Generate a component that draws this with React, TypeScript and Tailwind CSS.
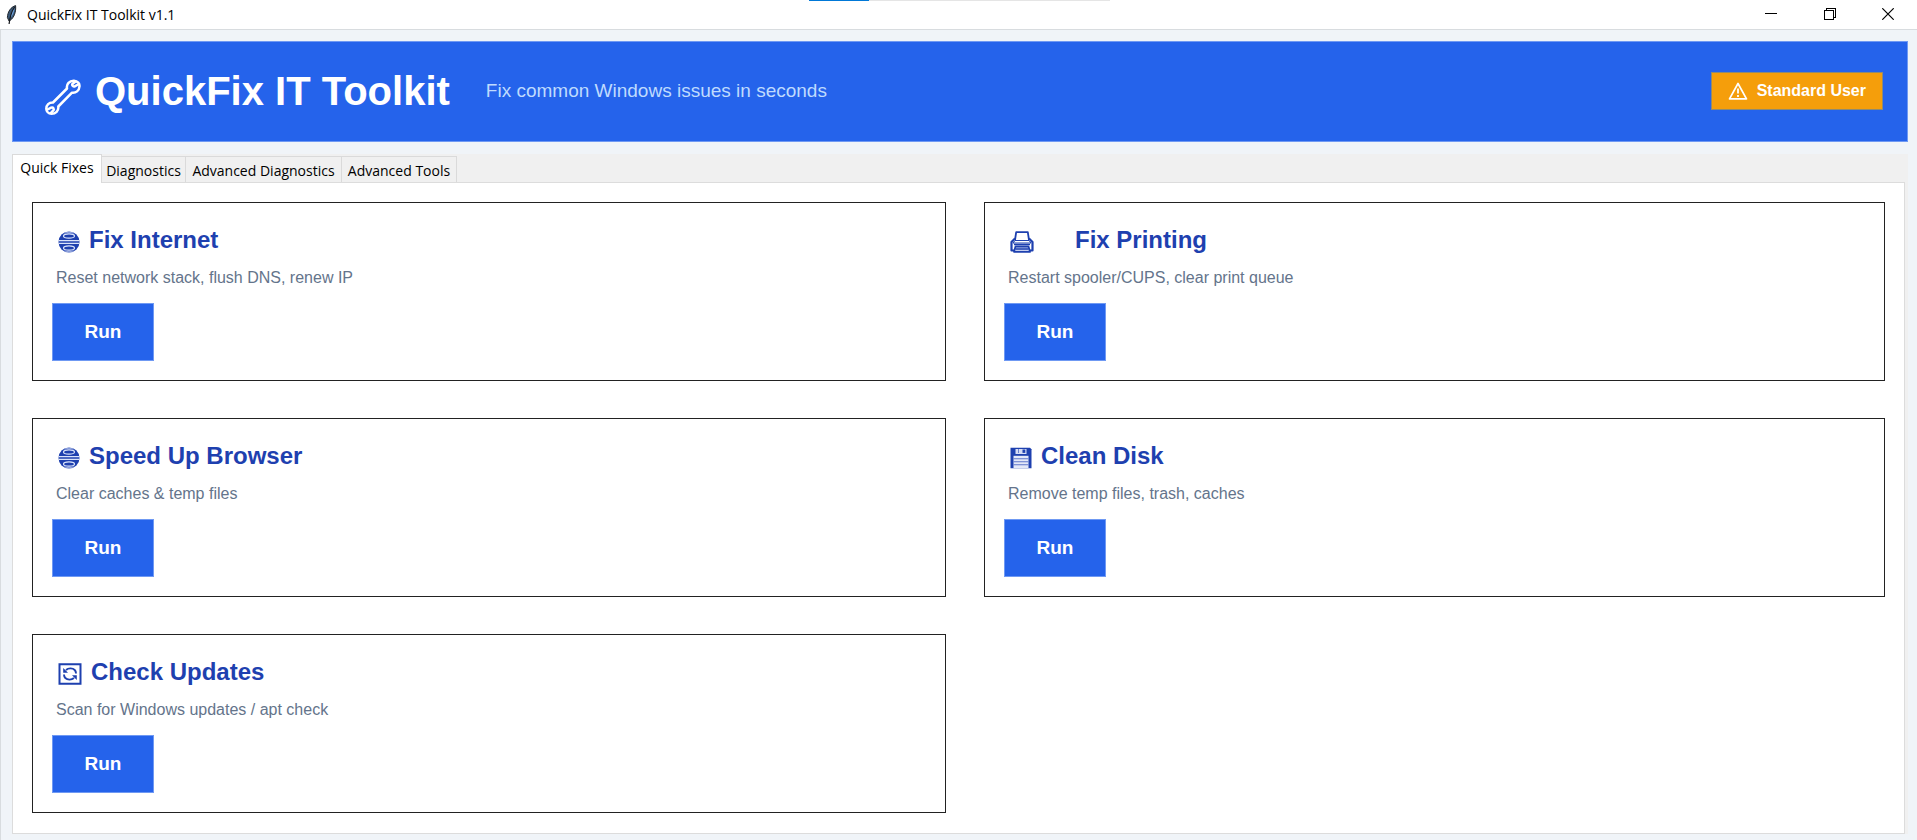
import React from "react";
import clsx from "clsx";

const sans = "font-['Liberation_Sans',Arial,sans-serif]";
const segoe = "font-['Open_Sans','Noto_Sans',sans-serif]";

function FeatherIcon() {
  return (
    <svg viewBox="0 0 12 20" className="w-3 h-5" aria-hidden="true">
      <path
        d="M9.6.6C5 2 1.6 6.500 1.400 12.500L3 16l1.400-.8C8 12.500 10.200 7 9.600.6Z"
        fill="#3a5878"
        stroke="#20252c"
        strokeWidth="1"
      />
      <path d="M8.600 2C6.400 4.500 5.400 8 4.800 12.500 7 10 8.600 6.500 8.600 2Z" fill="#6fa3dc" />
      <path d="M8.600 2C5.500 6.500 3.800 12 3.100 19" fill="none" stroke="#15181c" strokeWidth="1.200" />
    </svg>
  );
}

function WrenchIcon() {
  return (
    <svg viewBox="0 0 36 36" className="w-9 h-9" aria-hidden="true">
      <g
        fill="none"
        stroke="#fff"
        strokeWidth="2.500"
        strokeLinejoin="round"
        strokeLinecap="round"
      >
        <path d="M8 23.500 22 9.500C21.200 5 24.500 1.500 29 1.700c3.500.2 6 3 5.400 6-.2 4-3.500 6.500-7.400 6L13.300 27.500c.6 4.500-2.800 7.200-6.800 7.200-3.200 0-5.200-2.500-5.200-5C1.300 26 4 23.300 8 23.500Z" />
        <path d="m33 5.500-3.200 1.800c-2 .8-3.500-1.600-1.800-2.900L30.500 2.500" />
        <path d="m2.500 30.500 3.700-1.800c2-.8 3.500 1.600 1.900 2.900L6 33.800" />
      </g>
    </svg>
  );
}

function WarningIcon() {
  return (
    <svg viewBox="0 0 20 18" className="w-5 h-[18px]" aria-hidden="true">
      <path
        d="M10 1.500 18.500 16.800H1.500Z"
        fill="none"
        stroke="#fff"
        strokeWidth="1.700"
        strokeLinejoin="round"
      />
      <path d="M10 6.500v5M10 13v2" stroke="#fff" strokeWidth="1.800" />
    </svg>
  );
}

function GlobeIcon() {
  return (
    <svg viewBox="0 0 22 22" className="w-[22px] h-[22px]" aria-hidden="true">
      <circle cx="11" cy="11" r="10.500" fill="#1e40af" />
      <g fill="none" stroke="#dbe4fb" strokeWidth="1.200">
        <path d="M1 9.700h20M1 12.300h20" />
        <ellipse cx="11" cy="5" rx="5.500" ry="2.200" />
        <ellipse cx="11" cy="17" rx="5.500" ry="2.200" />
        <path d="M6.500 2.200C8.500.9 13.500.9 15.500 2.200M6.500 19.800c2 1.300 7 1.300 9 0" strokeWidth=".7" />
      </g>
    </svg>
  );
}

function PrinterIcon() {
  return (
    <svg viewBox="0 0 24 22" className="w-6 h-[22px]" aria-hidden="true">
      <g fill="none" stroke="#1e40af" strokeWidth="1.800" strokeLinejoin="round">
        <path d="M5 9 6.200 1.200h11.600L19 9" />
        <path d="M5 7.500 1.500 11v8.500H4M19 7.500l3.500 3.500v8.500H20" strokeWidth="2.200" />
        <path d="M5 9.500h14l2 2.500H3Z" strokeWidth="1" />
        <path d="M5.500 15.500h13l1.500 5.300H4Z" fill="#c5cff0" />
        <path d="M4 13.500h16M5.500 18h13" strokeWidth="1.300" />
      </g>
    </svg>
  );
}

function FloppyIcon() {
  return (
    <svg viewBox="0 0 22 22" className="w-[22px] h-[22px]" aria-hidden="true">
      <path d="M.5.800h19.500l1.500 1.500v19H.5Z" fill="#1e40af" />
      <path d="M5.500 2h11v5h-11Z" fill="#d5dcf5" />
      <path d="M12.500 2.500h2.800v3.400h-2.800Z" fill="#1e40af" />
      <path d="M8.500 2v4" stroke="#6d82cf" strokeWidth="1" />
      <path d="M3.500 8.800h15v12.200h-15Z" fill="#e3e8f8" />
      <path d="M3.500 11.800h15M3.500 14.800h15M3.500 17.800h15" stroke="#5f76c9" strokeWidth="1.100" />
    </svg>
  );
}

function UpdatesIcon() {
  return (
    <svg viewBox="0 0 24 22" className="w-6 h-[22px]" aria-hidden="true">
      <path d="M1.500 1.200h21v19.600h-21Z" fill="none" stroke="#1e40af" strokeWidth="2" />
      <g fill="none" stroke="#1e40af" strokeWidth="1.900">
        <path d="M8 7c2.500-2.200 6.700-2 8.700 0 .9.900 1.300 2 1.300 3.500" />
        <path d="M16 15c-2.500 2.200-6.700 2-8.700 0C6.400 14.100 6 13 6 11.500" />
      </g>
      <path d="M5.200 5v4.800H10ZM18.800 17v-4.800H14Z" fill="#1e40af" />
    </svg>
  );
}

const tabs = ["Quick Fixes", "Diagnostics", "Advanced Diagnostics", "Advanced Tools"];

const tabWidths = ["w-[90px]", "w-[84px]", "w-[156px]", "w-[115px]"];

const fixes = [
  { title: "Fix Internet", description: "Reset network stack, flush DNS, renew IP", icon: <GlobeIcon /> },
  {
    title: "Fix Printing",
    description: "Restart spooler/CUPS, clear print queue",
    icon: <PrinterIcon />,
    wide: true,
  },
  { title: "Speed Up Browser", description: "Clear caches & temp files", icon: <GlobeIcon /> },
  { title: "Clean Disk", description: "Remove temp files, trash, caches", icon: <FloppyIcon /> },
  { title: "Check Updates", description: "Scan for Windows updates / apt check", icon: <UpdatesIcon /> },
];

function TitleBar() {
  return (
    <div className="relative flex h-[30px] items-center justify-between border-b border-[#d8dcdf] bg-white">
      <div className="flex items-center gap-[9px] pl-1.5">
        <FeatherIcon />
        <span className={`${segoe} text-[14px] leading-5 text-black`}>QuickFix IT Toolkit v1.1</span>
      </div>
      <div className="absolute left-[809px] top-0 h-px w-[301px] bg-[#e5e5e5]">
        <div className="h-px w-[60px] bg-[#0078d7]"></div>
      </div>
      <div className="flex h-full pb-px">
        <button aria-label="Minimize" className="flex w-[59px] items-center justify-center">
          <svg viewBox="0 0 12 12" className="h-3 w-3" shapeRendering="crispEdges">
            <path d="M0 5.500h12" stroke="#000" />
          </svg>
        </button>
        <button aria-label="Restore" className="flex w-[59px] items-center justify-center">
          <svg viewBox="0 0 12 12" className="h-3 w-3" fill="none" shapeRendering="crispEdges">
            <path d="M.5 2.500h9v9h-9ZM2.500 2V.5h9v9H10" stroke="#000" />
          </svg>
        </button>
        <button aria-label="Close" className="flex w-[58px] items-center justify-center">
          <svg viewBox="0 0 12 12" className="h-3 w-3">
            <path d="m.3.300 11.400 11.400M11.700.300.300 11.700" stroke="#000" strokeWidth="1.200" />
          </svg>
        </button>
      </div>
    </div>
  );
}

function Banner() {
  return (
    <header className="flex h-[101px] items-center justify-between border border-[#6f99f3] bg-[#2563eb] pb-px pl-8 pr-6">
      <div className="flex items-center">
        <div className="mr-[14px] pt-3">
          <WrenchIcon />
        </div>
        <h1 className="text-[40px] leading-[46px] font-bold text-white">QuickFix IT Toolkit</h1>
        <p className="ml-9 text-[19px] leading-6 text-[#bfdbfe]">Fix common Windows issues in seconds</p>
      </div>
      <div className="flex h-[38px] items-center gap-[9px] border border-[#8f8a70] bg-[#f59e0b] px-4 text-white">
        <WarningIcon />
        <span className="text-[16px] leading-5 font-bold">Standard User</span>
      </div>
    </header>
  );
}

function FixCard({ fix }: { fix: (typeof fixes)[number] }) {
  return (
    <section className="border border-[#222] bg-white px-[19px] pt-[23px] pb-[19px]">
      <div className={clsx("flex items-center pl-1.5", fix.wide ? "gap-[41px]" : "gap-[9px]")}>
        <span className="shrink-0 pt-1">{fix.icon}</span>
        <h2 className="text-[24px] leading-7 font-bold text-[#1e40af]">{fix.title}</h2>
      </div>
      <p className="mt-[14px] pl-1 text-[16px] leading-5 text-[#64748b]">{fix.description}</p>
      <button className="mt-[15px] block h-[58px] w-[102px] border border-[#6f99f3] bg-[#2563eb] text-[19px] leading-6 font-bold text-white">
        Run
      </button>
    </section>
  );
}

export default function App() {
  return (
    <div className={`${sans} min-h-screen bg-[#f0f4f8]`}>
      <TitleBar />
      <main className="border-l border-[#d8dcdf] pt-[11px] pr-[9px] pb-[6px] pl-[11px]">
        <Banner />
        <div className="mt-3 bg-[#f0f0f0] pr-[3px]">
          <div role="tablist" className={`${segoe} flex h-7 items-end text-[14px] leading-5 text-black`}>
            {tabs.map((tab, i) => (
              <button
                key={tab}
                role="tab"
                aria-selected={i === 0}
                className={clsx(
                  "whitespace-nowrap border-[#dadada]",
                  tabWidths[i],
                  i === 0
                    ? "z-10 -mb-px h-[29px] border-x border-t bg-white pb-0.5"
                    : "h-[26px] border-t border-r bg-[#f0f0f0] pt-0.5"
                )}
              >
                {tab}
              </button>
            ))}
          </div>
          <div
            role="tabpanel"
            className="grid grid-cols-[914fr_901fr] gap-x-[38px] gap-y-[37px] border border-[#dcdcdc] bg-white px-[19px] pt-[19px] pb-5"
          >
            {fixes.map((fix) => (
              <FixCard key={fix.title} fix={fix} />
            ))}
          </div>
        </div>
      </main>
    </div>
  );
}
